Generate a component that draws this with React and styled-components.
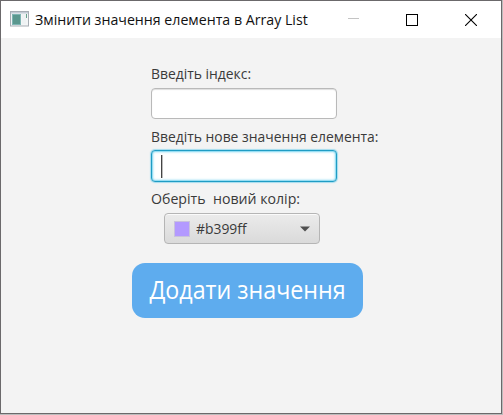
import React from "react";
import styled, { createGlobalStyle } from "styled-components";

const GlobalStyle = createGlobalStyle`
  * { box-sizing: border-box; }
  body { margin: 0; background: #bcbcbc; }
`;

const Window = styled.div`
  width: 502px;
  height: 414px;
  border: 1px solid #6b696b;
  background: #f3f3f3;
  font-family: "Open Sans", "Noto Sans", sans-serif;
  color: #3a3a3a;
  overflow: hidden;
`;

const TitleBar = styled.header`
  display: flex;
  align-items: center;
  height: 37px;
  padding-left: 9px;
  background: #fff;
  color: #111;
`;

const AppIcon = styled.svg`
  display: block;
  flex: none;
  width: 20px;
  height: 16px;
  margin: 0 5px 1px 0;
`;

const Text = styled.span`
  display: block;
  white-space: pre;
  font-size: ${(p) => p.$size || 15}px;
  line-height: 20px;
  margin-bottom: ${(p) => p.$lift || 0}px;
  transform: scaleX(${(p) => p.$stretch || 0.925});
  transform-origin: ${(p) => p.$origin || "left"};
`;

const WindowControls = styled.div`
  display: flex;
  margin-left: auto;
  padding-right: 1px;
`;

const ControlButton = styled.button`
  display: flex;
  align-items: center;
  justify-content: center;
  width: 59px;
  height: 37px;
  padding: 0;
  border: 0;
  background: none;
`;

const Form = styled.main`
  display: flex;
  flex-direction: column;
  align-items: flex-start;
  padding: 25px 0 0 150px;
`;

const Label = styled(Text).attrs({ as: "label" })`
  height: 20px;
`;

const Field = styled.div`
  display: flex;
  align-items: center;
  width: 186px;
  height: ${(p) => (p.$focused ? 32 : 31)}px;
  margin: ${(p) => (p.$focused ? 4 : 5)}px 0 ${(p) => p.$gap}px;
  padding-left: 9px;
  border-radius: 4px;
  background: #fff;
  border: ${(p) => (p.$focused ? "1.5px solid #1f9cc4" : "1px solid #b9b9b9")};
  box-shadow: ${(p) =>
    p.$focused
      ? "0 0 1px 1px #a5dcee, inset 0 0 1px 1px #8fdcf2, inset 0 0 2px 2px #d9f3fb"
      : "inset 0 1px 1px #dedede"};
`;

const Caret = styled.span`
  width: 1px;
  height: 23px;
  background: #444;
  box-shadow: 1px 0 0 #bbb;
`;

const ColorPicker = styled.button`
  display: flex;
  align-items: center;
  width: 156px;
  height: 31px;
  margin: 5px 0 19px 13px;
  padding: 0 9px;
  border: 1px solid #b5b5b5;
  border-radius: 4px;
  background: linear-gradient(#ebebeb, #dadada);
  box-shadow: inset 0 1px 0 #fafafa;
  color: #3a3a3a;
  font-family: inherit;
`;

const Swatch = styled.span`
  width: 16px;
  height: 16px;
  margin-right: 6px;
  border: 1px solid #c9c2dc;
  background: #b399ff;
`;

const Arrow = styled.svg`
  display: block;
  margin-left: auto;
`;

const SubmitButton = styled.button`
  display: flex;
  align-items: center;
  justify-content: center;
  width: 231px;
  height: 55px;
  margin-left: -19px;
  padding: 0;
  border: 0;
  border-radius: 13px;
  background: #5eacee;
  color: #fff;
  font-family: inherit;
`;

export default function App() {
  return (
    <>
      <GlobalStyle />
      <Window>
        <TitleBar>
          <AppIcon viewBox="0 0 20 16">
            <rect x="0.5" y="0.5" width="18" height="14.5" fill="#f3f5f6" stroke="#a7adb4" />
            <rect x="1" y="1" width="17" height="1.5" fill="#c3cbd5" />
            <rect x="2" y="3" width="9" height="11" fill="#7eb5b3" />
            <rect x="3" y="4" width="7" height="9" fill="#5a978e" />
            <rect x="12" y="3" width="4" height="10" fill="#eef2f3" />
            <rect x="16" y="3" width="1" height="4" fill="#67a18b" />
          </AppIcon>
          <Text $lift={1} $stretch={0.945}>Змінити значення елемента в Array List</Text>
          <WindowControls>
            <ControlButton>
              <svg width="12" height="12"><path d="M1 4.5h11" stroke="#c4c4c4" /></svg>
            </ControlButton>
            <ControlButton>
              <svg width="12" height="12"><rect x="0.5" y="0.5" width="11" height="11" fill="none" stroke="#000" /></svg>
            </ControlButton>
            <ControlButton>
              <svg width="12" height="12"><path d="M0 0L12 12M12 0L0 12" stroke="#000" strokeWidth="1.1" /></svg>
            </ControlButton>
          </WindowControls>
        </TitleBar>
        <Form>
          <Label>Введіть індекс:</Label>
          <Field $gap={7} />
          <Label>Введіть нове значення елемента:</Label>
          <Field $gap={6} $focused>
            <Caret />
          </Field>
          <Label $stretch={0.943}>Оберіть  новий колір:</Label>
          <ColorPicker>
            <Swatch />
            <Text $lift={1}>#b399ff</Text>
            <Arrow width="10" height="6"><path d="M0 0.5h10L5 5.5z" fill="#4f4f4f" /></Arrow>
          </ColorPicker>
          <SubmitButton>
            <Text $size={25} $lift={3} $stretch={0.93} $origin="center">Додати значення</Text>
          </SubmitButton>
        </Form>
      </Window>
    </>
  );
}
